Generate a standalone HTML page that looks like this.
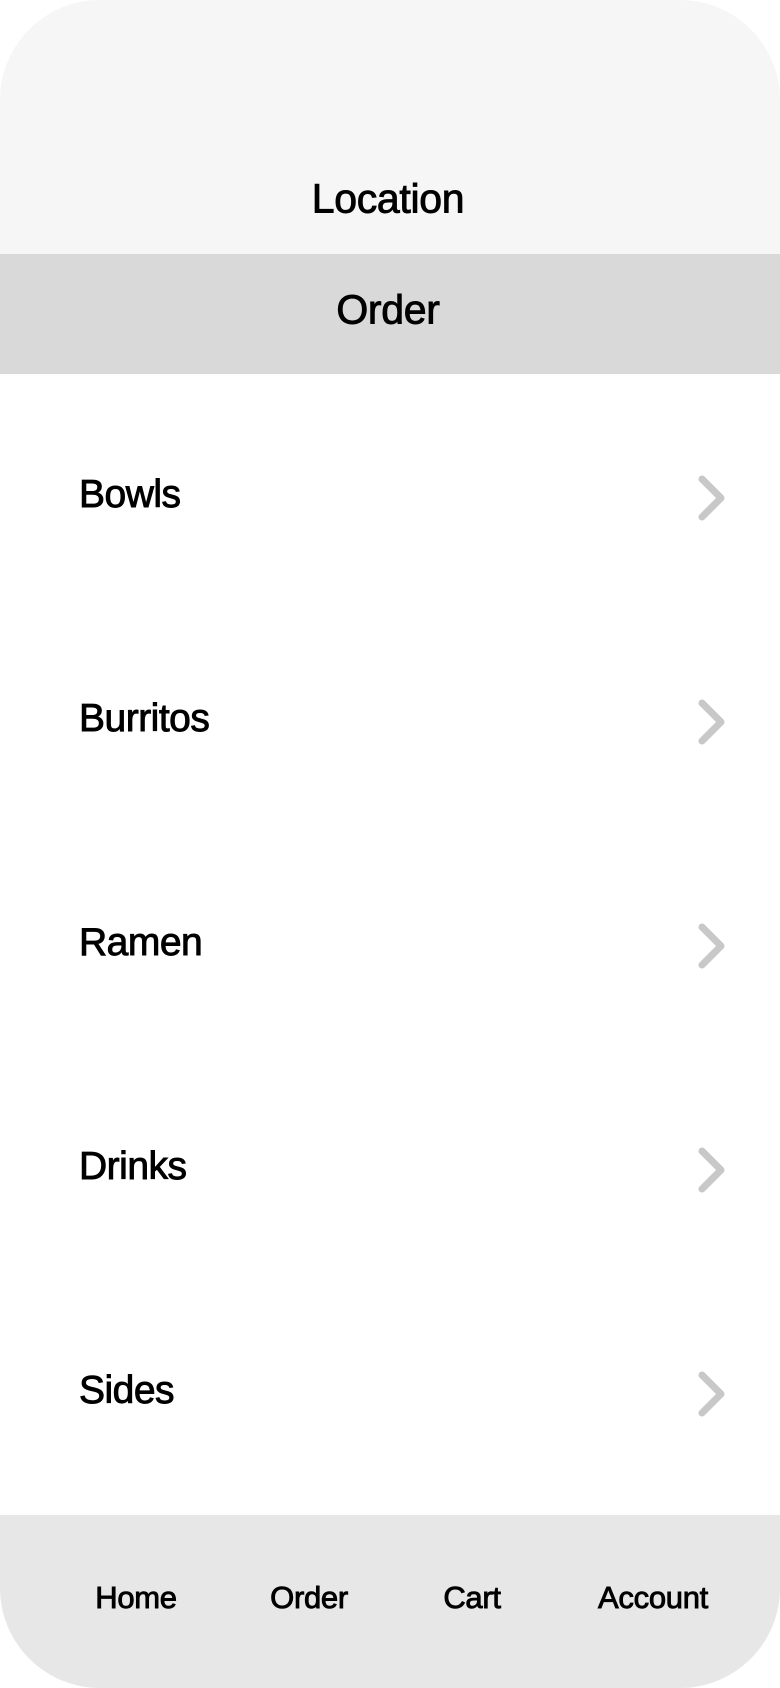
<!DOCTYPE html>
<html><head><meta charset="utf-8"><style>
html,body{margin:0;padding:0;background:#fff;}
body{width:780px;height:1688px;position:relative;overflow:hidden;font-family:"Liberation Sans",sans-serif;color:#000;}
.top{position:absolute;left:0;top:0;width:780px;height:254px;background:#f6f6f6;border-radius:100px 100px 0 0;}
.band{position:absolute;left:0;top:254px;width:780px;height:120px;background:#d9d9d9;}
.t,.item,.nav{-webkit-text-stroke:0.9px #000;}
.t{position:absolute;white-space:nowrap;transform:translate(-50%,-50%);letter-spacing:-0.3px;}
.item{position:absolute;left:79px;font-size:39px;transform:translateY(-50%);letter-spacing:-0.5px;}
.chev{position:absolute;left:697px;width:30px;height:48px;}
.foot{position:absolute;left:0;top:1515px;width:780px;height:173px;background:#e7e7e7;border-radius:0 0 100px 100px;}
.nav{position:absolute;top:1598px;font-size:31px;transform:translate(-50%,-50%);letter-spacing:-0.3px;}
</style></head><body>
<div class="top"></div>
<div class="t" style="left:388px;top:199px;font-size:41px;">Location</div>
<div class="band"></div>
<div class="t" style="left:388px;top:310px;font-size:41px;">Order</div>

<div class="item" style="top:495px;">Bowls</div>
<div class="item" style="top:719px;">Burritos</div>
<div class="item" style="top:943px;">Ramen</div>
<div class="item" style="top:1167px;">Drinks</div>
<div class="item" style="top:1391px;">Sides</div>

<svg class="chev" style="top:474px" viewBox="0 0 30 48"><path d="M5 5 L24 24 L5 43" fill="none" stroke="#c8c8c8" stroke-width="7" stroke-linecap="round" stroke-linejoin="round"/></svg>
<svg class="chev" style="top:698px" viewBox="0 0 30 48"><path d="M5 5 L24 24 L5 43" fill="none" stroke="#c8c8c8" stroke-width="7" stroke-linecap="round" stroke-linejoin="round"/></svg>
<svg class="chev" style="top:922px" viewBox="0 0 30 48"><path d="M5 5 L24 24 L5 43" fill="none" stroke="#c8c8c8" stroke-width="7" stroke-linecap="round" stroke-linejoin="round"/></svg>
<svg class="chev" style="top:1146px" viewBox="0 0 30 48"><path d="M5 5 L24 24 L5 43" fill="none" stroke="#c8c8c8" stroke-width="7" stroke-linecap="round" stroke-linejoin="round"/></svg>
<svg class="chev" style="top:1370px" viewBox="0 0 30 48"><path d="M5 5 L24 24 L5 43" fill="none" stroke="#c8c8c8" stroke-width="7" stroke-linecap="round" stroke-linejoin="round"/></svg>

<div class="foot"></div>
<div class="nav" style="left:136px;">Home</div>
<div class="nav" style="left:309px;">Order</div>
<div class="nav" style="left:472px;">Cart</div>
<div class="nav" style="left:653px;">Account</div>
</body></html>
